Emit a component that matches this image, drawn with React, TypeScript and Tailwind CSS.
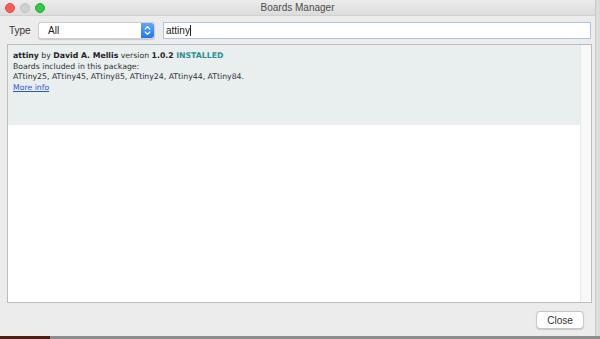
const ui = { fontFamily: '"Liberation Sans", Arial, sans-serif' };
const listFont = { fontFamily: '"DejaVu Sans", Verdana, sans-serif' };

const TrafficLights = () => (
  <div className="flex items-center gap-[5px] pl-[5px]">
    <span className="w-[10px] h-[10px] rounded-full bg-[#fc5d57] border border-[#e0443e]" />
    <span className="w-[10px] h-[10px] rounded-full bg-[#d0d0d0] border border-[#c2c2c2]" />
    <span className="w-[10px] h-[10px] rounded-full bg-[#34c84a] border border-[#27aa36]" />
  </div>
);

const Stepper = () => (
  <div className="w-[13px] h-full rounded-r-[3px] bg-gradient-to-b from-[#5ea6fb] to-[#1b78ef] flex items-center justify-center">
    <svg width="7" height="11" viewBox="0 0 7 11" fill="none" stroke="white" strokeWidth="1.3" strokeLinecap="round" strokeLinejoin="round">
      <path d="M1.2 4 L3.5 1.6 L5.8 4" />
      <path d="M1.2 7 L3.5 9.4 L5.8 7" />
    </svg>
  </div>
);

const BoardEntry = () => (
  <div className="h-[80px] bg-[#e9eeee] pl-[5px] pt-[6px] text-[7.75px] leading-[10.5px] text-[#333]" style={listFont}>
    <div>
      <span className="font-bold text-[#222]">attiny</span> by{" "}
      <span className="font-bold text-[#222]">David A. Mellis</span> version{" "}
      <span className="font-bold text-[#222]">1.0.2</span>{" "}
      <span className="font-bold text-[#2a8f95]">INSTALLED</span>
    </div>
    <div>Boards included in this package:</div>
    <div>ATtiny25, ATtiny45, ATtiny85, ATtiny24, ATtiny44, ATtiny84.</div>
    <div className="text-[#2d56d6] underline">More info</div>
  </div>
);

export default function App() {
  return (
    <div className="w-[600px] h-[339px] flex flex-col bg-[#d6d6d6] overflow-hidden" style={ui}>
      <div className="flex flex-1 min-h-0">
        <div className="w-[596px] flex flex-col bg-[#ececec] border-r border-[#c9c9c9]">
          <div className="h-[16px] relative flex items-center bg-gradient-to-b from-[#ececec] to-[#dcdcdc] border-b border-[#d0d0d0]">
            <TrafficLights />
            <div className="absolute inset-0 flex items-center justify-center text-[10px] text-[#4d4d4d]">
              Boards Manager
            </div>
          </div>

          <div className="flex items-center h-[17px] mt-[6px] pl-[9px] pr-[4px]">
            <span className="text-[10px] text-[#333] w-[29px]">Type</span>
            <div className="w-[117px] h-full flex bg-white rounded-[3px] border border-[#cfcfcf] shadow-[0_0.5px_1px_rgba(0,0,0,0.15)]">
              <span className="flex-1 pl-[9px] text-[10px] leading-[15px] text-[#222]">All</span>
              <Stepper />
            </div>
            <div className="ml-[8px] flex-1 h-full bg-white border border-[#a8c5e6] flex items-center pl-[2px] text-[10px] text-[#222]">
              attiny<span className="w-px h-[11px] bg-[#222]" />
            </div>
          </div>

          <div className="mt-[5px] ml-[7px] w-[585px] h-[259px] border border-[#bdbdbd] bg-white flex">
            <div className="flex-1">
              <BoardEntry />
            </div>
            <div className="w-[11px] bg-[#f8f8f8] border-l border-[#e8e8e8]" />
          </div>

          <div className="flex justify-end pr-[11px] mt-[8px]">
            <button className="w-[48px] h-[18px] bg-white border border-[#c8c8c8] rounded-[4px] text-[10px] text-[#333] shadow-[0_0.5px_1px_rgba(0,0,0,0.15)]">
              Close
            </button>
          </div>
        </div>
        <div className="flex-1 bg-[#dcdcdc]" />
      </div>
      <div className="h-[3px] flex">
        <div className="w-[50px] bg-[#4a2014]" />
        <div className="flex-1 bg-[#8e8e8e]" />
      </div>
    </div>
  );
}
